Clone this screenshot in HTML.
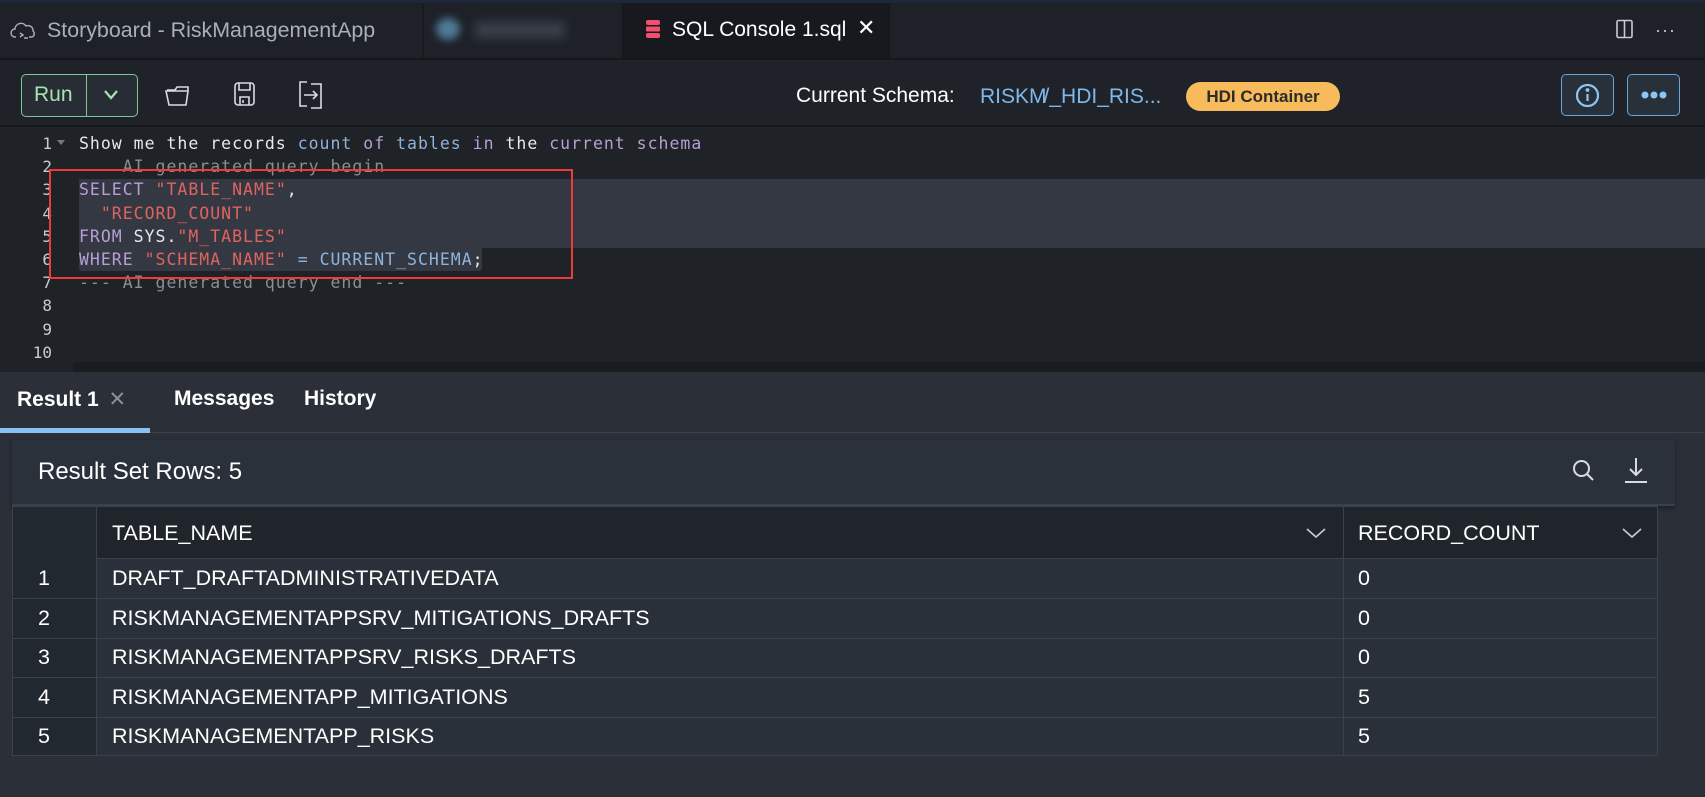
<!DOCTYPE html>
<html><head><meta charset="utf-8"><style>
*{margin:0;padding:0;box-sizing:border-box}
body{width:1705px;height:797px;overflow:hidden;background:#2a2f38;font-family:"Liberation Sans",sans-serif;position:relative;color:#fff}
.abs{position:absolute}
.mono{font-family:"DejaVu Sans Mono","Liberation Mono",monospace}
</style></head><body>
<!-- tab bar -->
<div class="abs" style="left:0;top:0;width:1705px;height:58px;background:#1e2128;border-top:3px solid #1d2938"></div>
<div class="abs" style="left:422px;top:3px;width:2px;height:55px;background:#181a1f"></div>
<svg class="abs" style="left:10px;top:21px" width="28" height="20" viewBox="0 0 28 20" fill="none" stroke="#aab0b8" stroke-width="1.4"><path d="M6 16H5a4 4 0 0 1 0-8 6 6 0 0 1 11-3 5 5 0 0 1 7 5 3.5 3.5 0 0 1-1 6h-3"/><path d="M10 12l3 2-3 2M14 17h4"/></svg>
<div class="abs" style="left:47px;top:18px;font-size:21.4px;color:#a8b0ba">Storyboard - RiskManagementApp</div>
<div class="abs" style="left:436px;top:18px;width:24px;height:22px;border-radius:50%;background:#4d7a95;filter:blur(4px)"></div>
<div class="abs" style="left:475px;top:22px;width:90px;height:16px;background:#3a404a;filter:blur(5px)"></div>
<div class="abs" style="left:622px;top:3px;width:268px;height:55px;background:#17191e"></div>
<svg class="abs" style="left:645px;top:19px" width="16" height="20" viewBox="0 0 16 20"><rect x="1" y="1" width="14" height="5" rx="2" fill="#f0506e"/><rect x="1" y="7.5" width="14" height="5" rx="1" fill="#f0506e"/><rect x="1" y="14" width="14" height="5" rx="2" fill="#f0506e"/></svg>
<div class="abs" style="left:672px;top:18px;font-size:21px;color:#fff">SQL Console 1.sql</div>
<div class="abs" style="left:857px;top:15px;font-size:22px;color:#fff">✕</div>
<svg class="abs" style="left:1615px;top:19px" width="20" height="20" viewBox="0 0 20 20" fill="none" stroke="#c8ccd2" stroke-width="1.6"><rect x="2" y="1.5" width="15" height="17" rx="1.5"/><path d="M9.5 1.5v17"/></svg>
<div class="abs" style="left:1655px;top:20px;font-size:18px;color:#c8ccd2;letter-spacing:1px">···</div>
<!-- toolbar -->
<div class="abs" style="left:0;top:58px;width:1705px;height:67px;background:#1f2329;border-top:2px solid #15171b"></div>
<div class="abs" style="left:21px;top:74px;width:117px;height:43px;border:1.5px solid #7bc98c;border-radius:5px;background:#282d35"></div>
<div class="abs" style="left:86px;top:75px;width:1px;height:41px;background:#7bc98c"></div>
<div class="abs" style="left:34px;top:83px;font-size:21px;color:#a6e3b0">Run</div>
<svg class="abs" style="left:103px;top:89px" width="16" height="12" viewBox="0 0 16 12" fill="none" stroke="#a6e3b0" stroke-width="2.2"><path d="M2 2l6 7 6-7"/></svg>
<svg class="abs" style="left:164px;top:82px" width="28" height="26" viewBox="0 0 28 26" fill="none" stroke="#d8dce2" stroke-width="1.6"><path d="M3 8h8l2-3h11v4M2 9h22l-2 14H5z"/></svg>
<svg class="abs" style="left:233px;top:81px" width="24" height="26" viewBox="0 0 24 26" fill="none" stroke="#d8dce2" stroke-width="1.6"><rect x="2" y="2" width="19" height="22" rx="3"/><path d="M6 2v7h11V2M7 24v-8h9v8M10 19v3"/></svg>
<svg class="abs" style="left:297px;top:80px" width="28" height="30" viewBox="0 0 28 30" fill="none" stroke="#d8dce2" stroke-width="1.6"><path d="M10 2H3v24h7M14 4h10v24H14M7 15h13M16 11l4 4-4 4"/></svg>
<div class="abs" style="left:796px;top:84px;font-size:21px;color:#fff">Current Schema:</div>
<div class="abs" style="left:980px;top:85px;font-size:21px;color:#7fb8ec">RISKM<span style="margin-left:-3px">/</span>_HDI_RIS...</div>
<div class="abs" style="left:1186px;top:82px;width:154px;height:29px;border-radius:15px;background:#f7bb5c;color:#2b2b2b;font-size:17px;font-weight:bold;text-align:center;line-height:29px">HDI Container</div>
<div class="abs" style="left:1561px;top:74px;width:53px;height:42px;border:1.5px solid #6aa6dc;border-radius:5px;background:#283039"></div>
<svg class="abs" style="left:1575px;top:83px" width="25" height="25" viewBox="0 0 25 25" fill="none" stroke="#8cc6f5" stroke-width="2.2"><circle cx="12.5" cy="12.5" r="10.5"/><path d="M12.5 11v7"/><circle cx="12.5" cy="7" r="0.8" fill="#8cc6f5"/></svg>
<div class="abs" style="left:1627px;top:74px;width:53px;height:42px;border:1.5px solid #6aa6dc;border-radius:5px;background:#283039"></div>
<svg class="abs" style="left:1640px;top:90px" width="28" height="10" viewBox="0 0 28 10" fill="#8cc6f5"><circle cx="5" cy="5" r="3.5"/><circle cx="14" cy="5" r="3.5"/><circle cx="23" cy="5" r="3.5"/></svg>
<!-- editor -->
<div class="abs" style="left:0;top:125px;width:1705px;height:247px;background:#1f2227;border-top:2px solid #15171b"></div>
<div class="abs" style="left:79px;top:179px;width:1626px;height:69px;background:#343842"></div>
<div class="abs" style="left:79px;top:248px;width:403px;height:23px;background:#343842;border-radius:0 0 3px 3px"></div>
<div class="abs" style="left:73px;top:362px;width:1632px;height:10px;background:#1a1c20"></div>
<div class="abs mono" style="left:0;top:132px;width:52px;text-align:right;font-size:16px;line-height:23.2px;color:#c8ccd2">1<br>2<br>3<br>4<br>5<br>6<br>7<br>8<br>9<br>10</div>
<div class="abs" style="left:57px;top:140px;width:0;height:0;border-left:4px solid transparent;border-right:4px solid transparent;border-top:5px solid #777"></div>
<div class="abs mono" style="left:79px;top:132px;font-size:16.5px;letter-spacing:1px;line-height:23.2px;white-space:pre;color:#e8e8e8">Show me the records <span style="color:#8fb3d9">count</span> <span style="color:#b79fd6">of</span> <span style="color:#8fb3d9">tables</span> <span style="color:#b79fd6">in</span> the <span style="color:#b79fd6">current schema</span>
<span style="color:#8a8d94">    AI generated query begin</span>
<span style="color:#b79fd6">SELECT</span> <span style="color:#e0645e">"TABLE_NAME"</span>,
  <span style="color:#e0645e">"RECORD_COUNT"</span>
<span style="color:#b79fd6">FROM</span> SYS.<span style="color:#e0645e">"M_TABLES"</span>
<span style="color:#b79fd6">WHERE</span> <span style="color:#e0645e">"SCHEMA_NAME"</span> <span style="color:#8fb3d9">=</span> <span style="color:#8fb3d9">CURRENT_SCHEMA</span>;
<span style="color:#8a8d94">--- AI generated query end ---</span></div>
<div class="abs" style="left:49px;top:169px;width:524px;height:110px;border:2px solid #f03a3a"></div>
<!-- results tabs -->
<div class="abs" style="left:0;top:372px;width:1705px;height:61px;background:#2a2f38;border-bottom:1px solid #3b424d"></div>
<div class="abs" style="left:17px;top:387px;font-size:21px;font-weight:bold;color:#fff">Result 1 <span style="color:#8b929c;font-weight:normal;margin-left:4px">✕</span></div>
<div class="abs" style="left:174px;top:387px;font-size:21px;font-weight:bold;color:#fff">Messages</div>
<div class="abs" style="left:304px;top:387px;font-size:21px;font-weight:bold;color:#fff">History</div>
<div class="abs" style="left:0;top:428px;width:150px;height:5px;background:#89c2f0"></div>
<!-- result panel -->
<div class="abs" style="left:12px;top:440px;width:1663px;height:66px;background:#2b313a;box-shadow:0 2px 4px rgba(0,0,0,.35);border-bottom:2px solid #3a414b"></div>
<div class="abs" style="left:38px;top:458px;font-size:24px;color:#fff">Result Set Rows: 5</div>
<svg class="abs" style="left:1571px;top:458px" width="26" height="26" viewBox="0 0 26 26" fill="none" stroke="#d8dce2" stroke-width="2"><circle cx="10.5" cy="10.5" r="7.5"/><path d="M16 16l6 6"/></svg>
<svg class="abs" style="left:1622px;top:455px" width="28" height="30" viewBox="0 0 28 30" fill="none" stroke="#d8dce2" stroke-width="2"><path d="M14 3v17M8 14l6 6 6-6M3 27h22"/></svg>
<!-- table -->
<div class="abs" style="left:12px;top:506px;width:1646px;height:250px;background:#29303a;border:1px solid #3a424d"></div>
<div class="abs" style="left:12px;top:506px;width:1646px;height:53px;background:#20252c;border:1px solid #3a424d"></div>
<div class="abs" style="left:12px;top:506px;width:85px;height:250px;background:#222830;border:1px solid #3a424d"></div>
<div class="abs" style="left:1343px;top:506px;width:1px;height:250px;background:#3a424d"></div>
<div class="abs" style="left:12px;top:598px;width:1646px;height:1px;background:#3a424d"></div>
<div class="abs" style="left:12px;top:638px;width:1646px;height:1px;background:#3a424d"></div>
<div class="abs" style="left:12px;top:677px;width:1646px;height:1px;background:#3a424d"></div>
<div class="abs" style="left:12px;top:717px;width:1646px;height:1px;background:#3a424d"></div>
<div class="abs" style="left:112px;top:521px;font-size:21.5px;color:#fff">TABLE_NAME</div>
<div class="abs" style="left:1358px;top:521px;font-size:21.5px;color:#fff">RECORD_COUNT</div>
<svg class="abs" style="left:1305px;top:526px" width="22" height="14" viewBox="0 0 22 14" fill="none" stroke="#c8ccd2" stroke-width="1.6"><path d="M2 3l9 8 9-8"/></svg>
<svg class="abs" style="left:1621px;top:526px" width="22" height="14" viewBox="0 0 22 14" fill="none" stroke="#c8ccd2" stroke-width="1.6"><path d="M2 3l9 8 9-8"/></svg>
<div class="abs" style="left:0;top:559px;font-size:21.5px;line-height:39.5px;color:#fff">
<div style="position:absolute;left:38px;top:0;white-space:pre">1<br>2<br>3<br>4<br>5</div>
<div style="position:absolute;left:112px;top:0;white-space:pre">DRAFT_DRAFTADMINISTRATIVEDATA<br>RISKMANAGEMENTAPPSRV_MITIGATIONS_DRAFTS<br>RISKMANAGEMENTAPPSRV_RISKS_DRAFTS<br>RISKMANAGEMENTAPP_MITIGATIONS<br>RISKMANAGEMENTAPP_RISKS</div>
<div style="position:absolute;left:1358px;top:0;white-space:pre">0<br>0<br>0<br>5<br>5</div>
</div>
</body></html>
